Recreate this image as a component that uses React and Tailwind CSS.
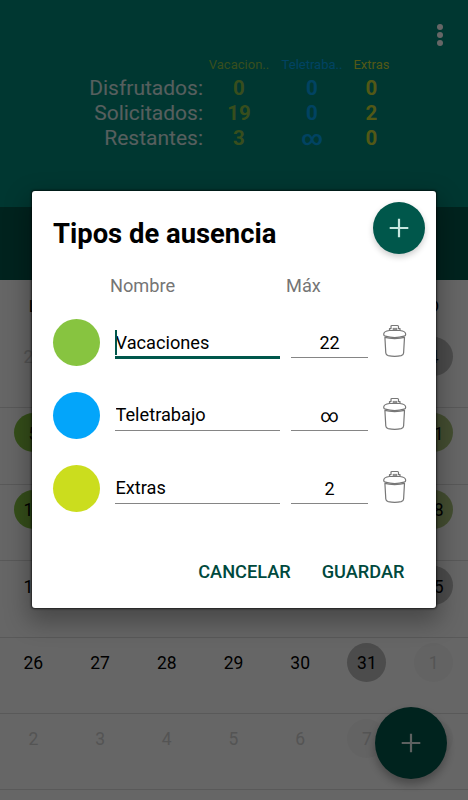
import React, { useState } from 'react';

const summary = [
    { name: 'Vacacion..', values: ['0', '19', '3'], color: 'text-[#8bc34a]', width: 'w-[72px]' },
    { name: 'Teletraba..', values: ['0', '0', '∞'], color: 'text-[#03a9f4]', width: 'w-[74px]' },
    { name: 'Extras', values: ['0', '2', '0'], color: 'text-[#cddc39]', width: 'w-[45px]' },
];

const weekDays = ['L', 'M', 'X', 'J', 'V', 'S', 'D'];

const weeks = [
    [28, 29, 30, 1, 2, 3, 4],
    [5, 6, 7, 8, 9, 10, 11],
    [12, 13, 14, 15, 16, 17, 18],
    [19, 20, 21, 22, 23, 24, 25],
    [26, 27, 28, 29, 30, 31, 1],
    [2, 3, 4, 5, 6, 7, 8],
];

const initialTypes = [
    { id: 1, name: 'Vacaciones', max: '22', color: 'bg-[#87c440]' },
    { id: 2, name: 'Teletrabajo', max: '∞', color: 'bg-[#03a5fa]' },
    { id: 3, name: 'Extras', max: '2', color: 'bg-[#cbdd1e]' },
];

const isOutside = (week, day) => (week === 0 && day > 20) || (week === 4 && day === 1) || week === 5;

const dayBackground = (week, col, day) => {
    if (isOutside(week, day)) {
        return col > 4 ? 'bg-[#f7f7f7]' : '';
    }
    if (week === 1 || week === 2) {
        return col > 4 ? 'bg-[#aac47c]' : 'bg-[#84c441]';
    }
    return col > 4 ? 'bg-[#bdbdbd]' : '';
};

const PlusIcon = () => (
    <svg width="20" height="20" viewBox="0 0 20 20" fill="none" stroke="currentColor" strokeWidth="2.2">
        <path d="M10 0.7v18.6M0.7 10h18.6" />
    </svg>
);

const TrashIcon = () => (
    <svg width="26" height="34" viewBox="0 0 26 34" fill="none" stroke="#777" strokeWidth="1.2" strokeLinejoin="round">
        <path d="M7.5 6.5V4.6h1.500V2.600Q9 1.500 10 1.500h5.500Q16.500 1.500 16.500 2.600V4.600H18V6.500" />
        <path d="M11 4.400h4v1.200h-4z" strokeWidth="0.9" />
        <path d="M7.500 6.500C4.200 6.900 1.700 8.500 1.700 10.200c0 1.300.4 1.700 1.600 2 5.200 1.500 13.600 1.500 18.800 0 1.200-.3 1.600-.7 1.600-2 0-1.700-2.500-3.300-5.800-3.700z" />
        <path d="M2.900 13.400c5 1.500 14.500 1.500 19.600 0l-.9 15.600c-.1 1.500-.9 2.300-2.400 2.700-3.800.8-9.200.8-13 0-1.500-.4-2.300-1.200-2.400-2.700z" />
    </svg>
);

const Header = () => (
    <header>
        <div className="relative h-[207px] bg-[#00897b] pt-[52px] flex items-start">
            <div className="w-[203px] pt-6 text-right text-[21px] leading-[24.8px] text-white/85">
                <div>Disfrutados:</div>
                <div>Solicitados:</div>
                <div>Restantes:</div>
            </div>
            <div className="flex">
                {summary.map((item) => (
                    <div key={item.name} className={`flex flex-col items-center ${item.width} ${item.color}`}>
                        <div className="h-6 text-[13px] leading-[25px] whitespace-nowrap">{item.name}</div>
                        {item.values.map((value, index) => (
                            <div key={index} className="text-[20.5px] leading-[24.8px] font-bold">{value}</div>
                        ))}
                    </div>
                ))}
            </div>
            <button className="absolute top-[24px] right-[25px] flex flex-col gap-[2px]" aria-label="Menú">
                <span className="w-[6px] h-[6px] rounded-full bg-white" />
                <span className="w-[6px] h-[6px] rounded-full bg-white" />
                <span className="w-[6px] h-[6px] rounded-full bg-white" />
            </button>
        </div>
        <div className="h-[73px] bg-[#00574b]" />
    </header>
);

const Calendar = () => (
    <main className="w-[467px]">
        <div className="grid grid-cols-7 h-[52px] text-center text-[17px] leading-[52px]">
            {weekDays.map((day) => (
                <div key={day}>{day}</div>
            ))}
        </div>
        {weeks.map((week, row) => (
            <div key={row} className="grid grid-cols-7 justify-items-center w-[468px] h-[76.4px] pt-[5px] pr-px border-b border-[#dedede]">
                {week.map((day, col) => (
                    <div
                        key={col}
                        className={`flex items-center justify-center w-[39px] h-[39px] pt-[2px] rounded-full text-[17.5px] ${dayBackground(row, col, day)} ${isOutside(row, day) ? 'text-[#d2d2d2]' : 'text-black'}`}
                    >
                        {day}
                    </div>
                ))}
            </div>
        ))}
    </main>
);

const AbsenceDialog = () => {
    const [types, setTypes] = useState(initialTypes);

    const updateType = (id, field, value) => {
        setTypes(types.map((type) => (type.id === id ? { ...type, [field]: value } : type)));
    };

    const removeType = (id) => setTypes(types.filter((type) => type.id !== id));

    const addType = () => setTypes([...types, { id: Date.now(), name: '', max: '', color: 'bg-[#03a5fa]' }]);

    return (
        <div className="w-[404px] h-[417px] flex flex-col rounded-[3px] bg-white shadow-[0_10px_24px_4px_rgba(0,0,0,0.3),0_0_2px_1px_rgba(0,0,0,0.6)]">
            <div className="flex justify-between pl-[21px] pr-[11px] pt-[11px]">
                <h2 className="pt-[14px] text-[27.4px] leading-9 font-bold text-black">Tipos de ausencia</h2>
                <button
                    onClick={addType}
                    className="flex items-center justify-center w-[52px] h-[52px] rounded-full bg-[#00574b] text-[#c5e6df] shadow-[0_3px_6px_rgba(0,0,0,0.2)]"
                >
                    <PlusIcon />
                </button>
            </div>
            <div className="flex h-[52px] pl-[78px] pt-[20px] text-[18.2px] leading-6 text-[#757575]">
                <div className="w-[176px]">Nombre</div>
                <div>Máx</div>
            </div>
            {types.map((type, index) => (
                <div key={type.id} className="flex items-center h-[73px] pl-[21px]">
                    <span className={`w-[47px] h-[47px] rounded-full ${type.color}`} />
                    <div className={`relative ml-[15px] w-[165px] h-[33px] ${index === 0 ? 'border-b-[3px] border-[#00574b]' : 'mb-[2px] border-b border-[#858585]'}`}>
                        {index === 0 && <span className="absolute left-0 top-[4px] w-[2px] h-[25px] bg-[#00574b]" />}
                        <input
                            className="block w-full h-[33px] pl-[0.5px] text-[18.2px] text-black outline-none"
                            value={type.name}
                            onChange={(e) => updateType(type.id, 'name', e.target.value)}
                        />
                    </div>
                    <input
                        className="ml-[11px] mb-[2px] w-[77px] h-[33px] pt-[2px] border-b border-[#858585] text-center text-[18px] text-black outline-none"
                        value={type.max}
                        onChange={(e) => updateType(type.id, 'max', e.target.value)}
                    />
                    <button onClick={() => removeType(type.id)} className="ml-[13.500px] mb-[3px]" aria-label="Eliminar">
                        <TrashIcon />
                    </button>
                </div>
            ))}
            <div className="mt-auto flex justify-end gap-[31px] pr-[31.500px] pb-[24px] text-[18.2px] leading-6 font-medium text-[#00493d]">
                <button>CANCELAR</button>
                <button>GUARDAR</button>
            </div>
        </div>
    );
};

const App = () => {
    return (
        <div className="relative w-[468px] h-[800px] overflow-hidden bg-white font-['Roboto',sans-serif]">
            <Header />
            <Calendar />
            <button className="absolute left-[375px] top-[707px] flex items-center justify-center w-[72px] h-[72px] rounded-full bg-[#00574b] text-[#e8f3f0] shadow-[0_5px_10px_rgba(0,0,0,0.3)]">
                <PlusIcon />
            </button>
            <div className="absolute inset-0 flex justify-center pt-[191px] bg-black/60">
                <AbsenceDialog />
            </div>
        </div>
    );
};

export default App;
